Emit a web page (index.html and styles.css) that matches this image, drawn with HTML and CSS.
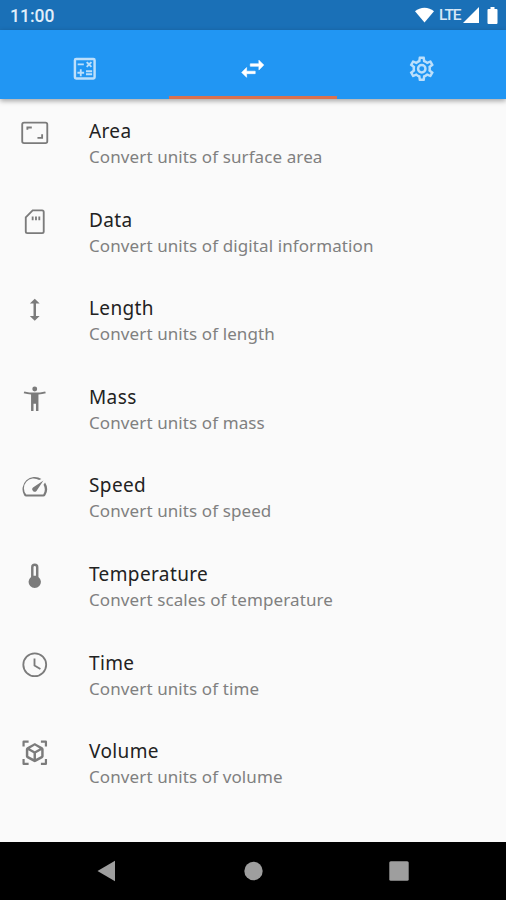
FILE: index.html
```html
<!DOCTYPE html>
<html lang="en">
<head>
<meta charset="utf-8">
<title>Unit converter</title>
<link rel="stylesheet" href="styles.css">
</head>
<body>
<div class="screen">
  <header class="status">
    <span class="clock">11:00</span>
    <svg class="wifi" viewBox="0 0 20 16"><path d="M0 4C5.500-1 14.500-1 20 4L10 16Z"/></svg>
    <span class="network">LTE</span>
    <svg class="signal" viewBox="0 0 16 16"><path d="M16 0V16H0Z"/></svg>
    <svg class="battery" viewBox="0 0 10 17"><path d="M3 0h4v2h2q1 0 1 1v13q0 1-1 1H1q-1 0-1-1V3q0-1 1-1h2Z"/></svg>
  </header>
  <nav class="tabs">
    <div class="tab">
      <svg class="icon" viewBox="0 0 24 24"><path d="M19 3H5a2 2 0 0 0-2 2v14a2 2 0 0 0 2 2h14a2 2 0 0 0 2-2V5a2 2 0 0 0-2-2Zm0 16H5V5h14v14ZM6.250 7.720h5v1.500h-5v-1.500ZM13 15.750h5v1.500h-5v-1.500ZM13 13.250h5v1.500h-5v-1.500ZM8 18h1.500v-2h2v-1.500h-2v-2H8v2H6V16h2v2ZM14.090 10.950l1.410-1.410 1.410 1.410 1.060-1.060-1.410-1.420 1.410-1.410L16.910 6 15.500 7.410 14.090 6l-1.060 1.060 1.410 1.410-1.410 1.420 1.060 1.060Z"/></svg>
    </div>
    <div class="tab tab-active">
      <svg class="icon icon-bold" viewBox="0 0 24 24"><path d="M21 9l-4-4v3h-7v2h7v3l4-4ZM7 11l-4 4 4 4v-3h7v-2H7v-3Z"/></svg>
    </div>
    <div class="tab">
      <svg class="icon" viewBox="0 0 24 24"><path d="M19.430 12.980c.04-.32.07-.64.07-.98 0-.34-.03-.66-.07-.98l2.110-1.650c.19-.15.24-.42.12-.64l-2-3.460a.5.500 0 0 0-.61-.22l-2.490 1c-.52-.4-1.080-.73-1.690-.98l-.38-2.650A.488.488 0 0 0 14 2h-4c-.25 0-.46.18-.49.42l-.38 2.650c-.61.25-1.170.59-1.690.98l-2.490-1a.5.500 0 0 0-.61.22l-2 3.460c-.13.220-.07.490.12.640l2.110 1.650c-.04.320-.07.650-.07.980 0 .330.030.660.070.980l-2.110 1.650c-.19.150-.24.420-.12.640l2 3.460c.12.220.39.300.610.220l2.490-1c.52.400 1.080.730 1.690.980l.38 2.650c.03.240.24.420.49.420h4c.25 0 .46-.18.49-.42l.38-2.650c.61-.25 1.170-.59 1.690-.98l2.490 1c.23.090.49 0 .61-.22l2-3.460a.5.500 0 0 0-.12-.64l-2.110-1.650ZM17.450 11.270c.04.310.05.520.05.730s-.02.430-.05.730l-.14 1.130.89.700 1.080.84-.7 1.210-1.270-.51-1.040-.42-.9.680c-.43.320-.84.560-1.250.730l-1.060.43-.16 1.130-.2 1.350h-1.400l-.19-1.350-.16-1.130-1.060-.43c-.43-.18-.83-.41-1.230-.71l-.91-.7-1.060.43-1.270.51-.7-1.210 1.080-.84.890-.7-.14-1.130c-.03-.31-.05-.54-.05-.74s.02-.43.05-.73l.14-1.130-.89-.7-1.080-.84.700-1.210 1.270.51 1.040.42.900-.68c.43-.32.840-.56 1.250-.73l1.060-.43.160-1.130.200-1.350h1.390l.19 1.350.16 1.130 1.060.43c.43.180.83.410 1.230.710l.91.700 1.060-.43 1.270-.51.700 1.210-1.070.85-.89.700.14 1.130ZM12 8a4 4 0 1 0 0 8 4 4 0 0 0 0-8Zm0 6a2 2 0 1 1 0-4 2 2 0 0 1 0 4Z"/></svg>
    </div>
  </nav>
  <main class="list">
    <div class="row">
      <svg class="icon icon-line" viewBox="0 0 24 24"><rect x="1.800" y="3.700" width="20.400" height="16.800" rx="1.500"/><path d="M6 9.500V7.700h3.600M18 13.300v2.900h-3.800"/></svg>
      <div class="text"><div class="title">Area</div><div class="subtitle">Convert units of surface area</div></div>
    </div>
    <div class="row">
      <svg class="icon icon-line" viewBox="0 0 24 24"><path d="M10.300 2.800H18q1.300 0 1.300 1.300V20q0 1.300-1.300 1.300H6q-1.300 0-1.300-1.300V8.400Z"/><path d="M10.300 7.700v3M13 7.700v3M15.700 7.700v3"/></svg>
      <div class="text"><div class="title">Data</div><div class="subtitle">Convert units of digital information</div></div>
    </div>
    <div class="row">
      <svg class="icon" viewBox="0 0 24 24"><path d="M13 6.990h3L12 3 8 6.990h3v10.020H8L12 21l4-3.990h-3V6.990Z"/></svg>
      <div class="text"><div class="title">Length</div><div class="subtitle">Convert units of length</div></div>
    </div>
    <div class="row">
      <svg class="icon" viewBox="0 0 24 24"><path d="M20.500 6c-2.610.7-5.670 1-8.500 1s-5.890-.3-8.500-1L3 7.500c1.860.5 4 .83 6 1V22h2v-6h2v6h2V8.500c2-.17 4.140-.5 6-1l-.5-1.500ZM12 6a2 2 0 1 0 0-4 2 2 0 0 0 0 4Z"/></svg>
      <div class="text"><div class="title">Mass</div><div class="subtitle">Convert units of mass</div></div>
    </div>
    <div class="row">
      <svg class="icon" viewBox="0 0 24 24"><path d="M20.380 8.570l-1.230 1.850a8 8 0 0 1-.22 7.980H5.070A8 8 0 0 1 15.580 6.550l1.850-.93A10 10 0 0 0 3.350 19a2 2 0 0 0 1.720 1h13.850a2 2 0 0 0 1.740-1 10 10 0 0 0-.27-10.440ZM10.590 15.410a2 2 0 0 0 2.830 0l5.660-8.490-8.490 5.660a2 2 0 0 0 0 2.830Z"/></svg>
      <div class="text"><div class="title">Speed</div><div class="subtitle">Convert units of speed</div></div>
    </div>
    <div class="row">
      <svg class="icon" viewBox="0 0 24 24"><path d="M15 13V5a3 3 0 0 0-6 0v8a5 5 0 1 0 6 0ZM11 12V5a1 1 0 0 1 2 0v7Z"/></svg>
      <div class="text"><div class="title">Temperature</div><div class="subtitle">Convert scales of temperature</div></div>
    </div>
    <div class="row">
      <svg class="icon icon-line" viewBox="0 0 24 24"><circle cx="12" cy="12" r="9.300"/><path d="M11.800 7v5.600l4.800 2.900"/></svg>
      <div class="text"><div class="title">Time</div><div class="subtitle">Convert units of time</div></div>
    </div>
    <div class="row">
      <svg class="icon" viewBox="0 0 24 24"><path d="M3.800 7H2V3q0-1 1-1h4v1.800H3.800ZM17 2h4q1 0 1 1v4h-1.800V3.800H17ZM2 17h1.800v3.200H7V22H3q-1 0-1-1ZM20.200 17H22v4q0 1-1 1h-4v-1.800h3.200ZM18.250 7.600l-5.250-3.020c-.62-.36-1.380-.36-2 0L5.750 7.600c-.62.360-1 1.020-1 1.740v5.320c0 .72.380 1.380 1 1.740L11 19.420c.62.360 1.380.360 2 0l5.250-3.020c.62-.36 1-1.020 1-1.740V9.340c0-.72-.38-1.380-1-1.740ZM11 16.960l-4.250-2.300v-4.620L11 12.500v4.460Zm1-6.190L8.040 8.480 12 6.190l3.960 2.290L12 10.770Zm5.250 3.890L13 16.960V12.500l4.250-2.460v4.620Z"/></svg>
      <div class="text"><div class="title">Volume</div><div class="subtitle">Convert units of volume</div></div>
    </div>
  </main>
  <footer class="navbar">
    <svg class="nav-icon" viewBox="0 0 20 22"><path d="M.5 11 18 .8V21.200Z"/></svg>
    <svg class="nav-icon" viewBox="0 0 20 22"><circle cx="10.500" cy="11" r="9.200"/></svg>
    <svg class="nav-icon" viewBox="0 0 20 22"><rect x=".3" y="1.300" width="19.400" height="19.400" rx="1.500"/></svg>
  </footer>
</div>
</body>
</html>
```

FILE: styles.css
```css
body {
  margin: 0;
  font-family: "Noto Sans", sans-serif;
}

svg {
  display: block;
  fill: currentColor;
}

.screen {
  display: flex;
  flex-direction: column;
  width: 506px;
  height: 900px;
  background: #fafafa;
}

.status {
  display: flex;
  flex: none;
  align-items: center;
  box-sizing: border-box;
  height: 30px;
  padding: 0 8px 0 10px;
  background: #1a70b7;
  color: #fff;
  font-family: Roboto, sans-serif;
}

.clock {
  flex: 1;
  padding-top: 2px;
  font-size: 17.500px;
  font-weight: 500;
  color: #e0eefa;
}

.wifi {
  width: 19px;
  height: 16px;
}

.network {
  width: 23px;
  margin-left: 5px;
  font-size: 15.500px;
  font-weight: 500;
  letter-spacing: -1.100px;
  color: #d6e7f6;
}

.signal {
  width: 16px;
  height: 16px;
  margin-left: 1px;
}

.battery {
  width: 11px;
  height: 17px;
  margin-left: 8px;
}

.tabs {
  display: flex;
  flex: none;
  height: 69px;
  background: #2196f3;
  box-shadow: 0 2px 5px rgba(0, 0, 0, 0.35);
}

.tab {
  display: flex;
  flex: 1;
  align-items: center;
  justify-content: center;
  box-sizing: border-box;
  padding-top: 11px;
  border-bottom: 3px solid transparent;
  color: #bcdffb;
}

.tab-active {
  border-bottom-color: #d9714f;
  color: #fff;
}

.icon {
  flex: none;
  width: 29.500px;
  height: 29.500px;
}

.icon-bold {
  stroke: currentColor;
  stroke-width: 0.500;
}

.icon-line {
  fill: none;
  stroke: currentColor;
  stroke-width: 1.500;
}

.list {
  flex: 1;
  padding-top: 9px;
}

.row {
  display: flex;
  box-sizing: border-box;
  height: 88.600px;
  padding: 10px 20px 0 20px;
  gap: 39.500px;
  color: #7b7b7b;
}

.title {
  font-size: 19px;
  line-height: 26px;
  letter-spacing: 0.380px;
  color: #222;
}

.subtitle {
  font-size: 17px;
  line-height: 26px;
  letter-spacing: 0.100px;
  color: #808080;
}

.navbar {
  display: flex;
  flex: none;
  align-items: center;
  justify-content: center;
  gap: 126px;
  height: 58px;
  background: #000;
  color: #9e9e9e;
}

.nav-icon {
  width: 20px;
  height: 22px;
}
```
